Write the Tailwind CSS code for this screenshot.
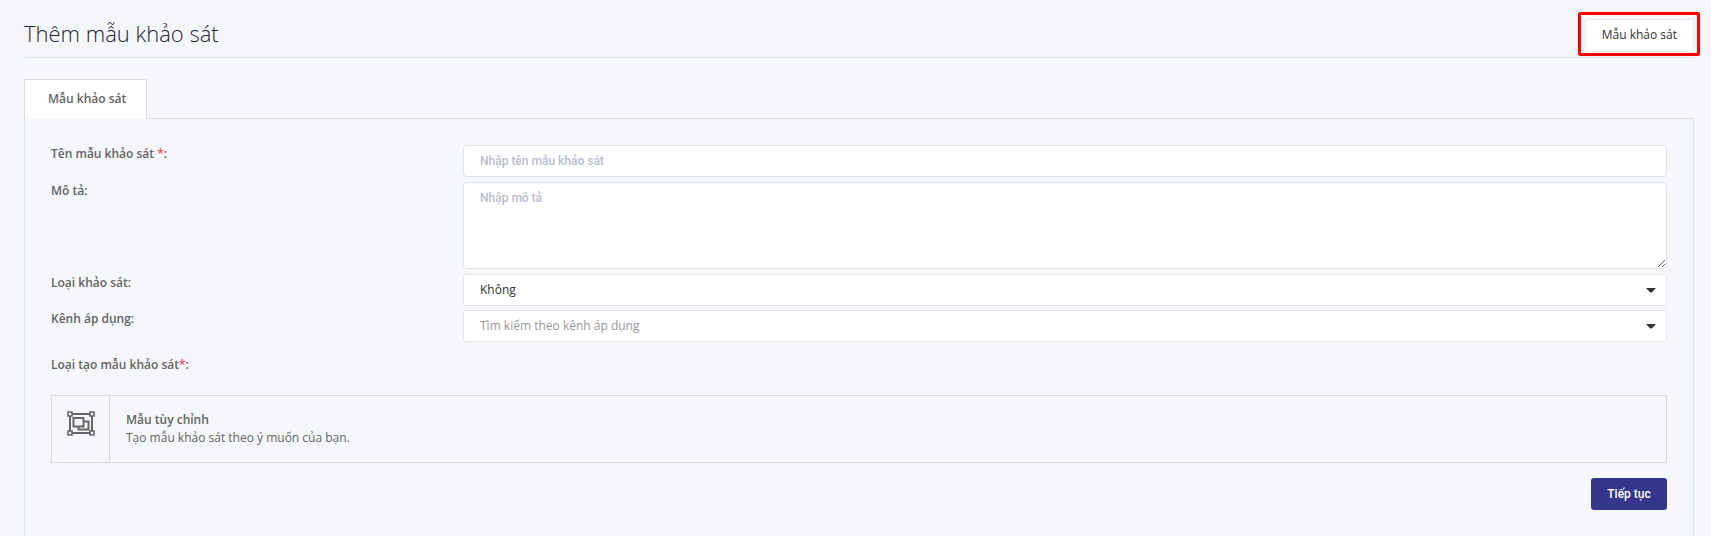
<!DOCTYPE html>
<html lang="vi">
<head>
<meta charset="utf-8">
<meta name="viewport" content="width=device-width, initial-scale=1">
<title>Thêm mẫu khảo sát</title>
<script src="https://cdn.jsdelivr.net/npm/@tailwindcss/browser@4"></script>
</head>
<body class="flex min-h-screen flex-col bg-[#f5f7fb] pl-6 pr-[17px] font-['Open_Sans',sans-serif] text-[12px] leading-[18px] text-[#646464]">
  <header class="flex items-end justify-between border-b border-[#e1e5ec] pt-[17px]">
    <h1 class="pb-2 text-[22px] leading-[32px] font-light text-[#1f2433]">Thêm mẫu khảo sát</h1>
    <div class="relative mb-[5px]">
      <button type="button" class="h-[33px] rounded-[3px] border border-[#e8eaee] bg-white px-4 pb-0.5 text-[#333]">Mẫu khảo sát</button>
      <span class="pointer-events-none absolute -top-[7px] -right-[6px] -bottom-1 -left-[7px] rounded-[2px] border-3 border-[#ff0000]"></span>
    </div>
  </header>

  <main class="mt-[21px] flex grow flex-col">
    <div role="tablist" class="flex">
      <button type="button" role="tab" aria-selected="true" class="h-10 border border-b-0 border-[#dadcde] bg-white pr-5 pb-0.5 pl-[23px] font-semibold">Mẫu khảo sát</button>
      <span class="grow border-b border-[#dadcde]"></span>
    </div>

    <form class="grow border-x border-[#dfe5ea] px-[26px] pt-[26px] pb-6">
      <div class="flex flex-col gap-1">
        <div class="flex pb-px">
          <label for="name" class="w-1/4 font-semibold">Tên mẫu khảo sát <span class="text-[#f64e4e]">*</span>:</label>
          <div class="grow pl-2"><input id="name" type="text" placeholder="Nhập tên mẫu khảo sát" class="block h-8 w-full rounded-[4px] border border-[#dce4e9] bg-white px-4 font-[Roboto,sans-serif] text-[12px] font-medium placeholder:text-[#b9bccb]"></div>
        </div>
        <div class="flex pb-px">
          <label for="desc" class="w-1/4 font-semibold">Mô tả:</label>
          <div class="grow pl-2"><textarea id="desc" placeholder="Nhập mô tả" class="block h-[87px] w-full rounded-[4px] border border-[#dce4e9] bg-white px-4 py-1.5 font-[Roboto,sans-serif] text-[12px] leading-[18px] font-medium placeholder:text-[#b9bccb]"></textarea></div>
        </div>
        <div class="flex">
          <label for="type" class="w-1/4 font-semibold">Loại khảo sát:</label>
          <div class="relative grow pl-2">
            <select id="type" class="block h-8 w-full appearance-none rounded-[3px] border border-[#e6e8ea] bg-white px-4 text-[#333]"><option>Không</option></select>
            <svg class="pointer-events-none absolute top-[14px] right-[11px] h-[5px] w-[10px]" viewBox="0 0 10 5" fill="#333"><path d="M0 0h10L6 4.2Q5 5 4 4.2Z"/></svg>
          </div>
        </div>
        <div class="flex">
          <label for="channel" class="w-1/4 font-semibold">Kênh áp dụng:</label>
          <div class="relative grow pl-2">
            <select id="channel" class="block h-8 w-full appearance-none rounded-[3px] border border-[#e6e8ea] bg-white px-4 text-[#999]"><option>Tìm kiếm theo kênh áp dụng</option></select>
            <svg class="pointer-events-none absolute top-[14px] right-[11px] h-[5px] w-[10px]" viewBox="0 0 10 5" fill="#333"><path d="M0 0h10L6 4.2Q5 5 4 4.2Z"/></svg>
          </div>
        </div>
      </div>

      <p class="mt-[14px] font-semibold">Loại tạo mẫu khảo sát<span class="text-[#f64e4e]">*</span>:</p>

      <button type="button" class="mt-[21px] flex h-[68px] w-full border border-[#d8d9dc] text-left">
        <span class="flex h-full w-[58px] shrink-0 border-r border-[#d8d9dc] pt-[15px] pl-[15px]">
          <svg class="h-[25px] w-[28px]" viewBox="0 0 28 25" fill="none" stroke="#666" stroke-width="2">
            <path d="M5 3h18M5 22h18M3 5v15M25 5v15"/>
            <path stroke-width="1.6" d="M1 1h4v4H1zM23 1h4v4h-4zM1 20h4v4H1zM23 20h4v4h-4z"/>
            <path d="M6.500 7h10v8.500h-10zM17 10.500h4.500v8H11.500v-3"/>
          </svg>
        </span>
        <span class="flex flex-col pt-[15px] pl-4">
          <span class="font-semibold">Mẫu tùy chỉnh</span>
          <span>Tạo mẫu khảo sát theo ý muốn của bạn.</span>
        </span>
      </button>

      <div class="mt-[15px] flex justify-end">
        <button type="submit" class="h-8 min-w-[76px] rounded-[3px] bg-[#34368c] px-4 font-[Roboto,sans-serif] text-[12px] font-medium text-white">Tiếp tục</button>
      </div>
    </form>
  </main>
</body>
</html>
